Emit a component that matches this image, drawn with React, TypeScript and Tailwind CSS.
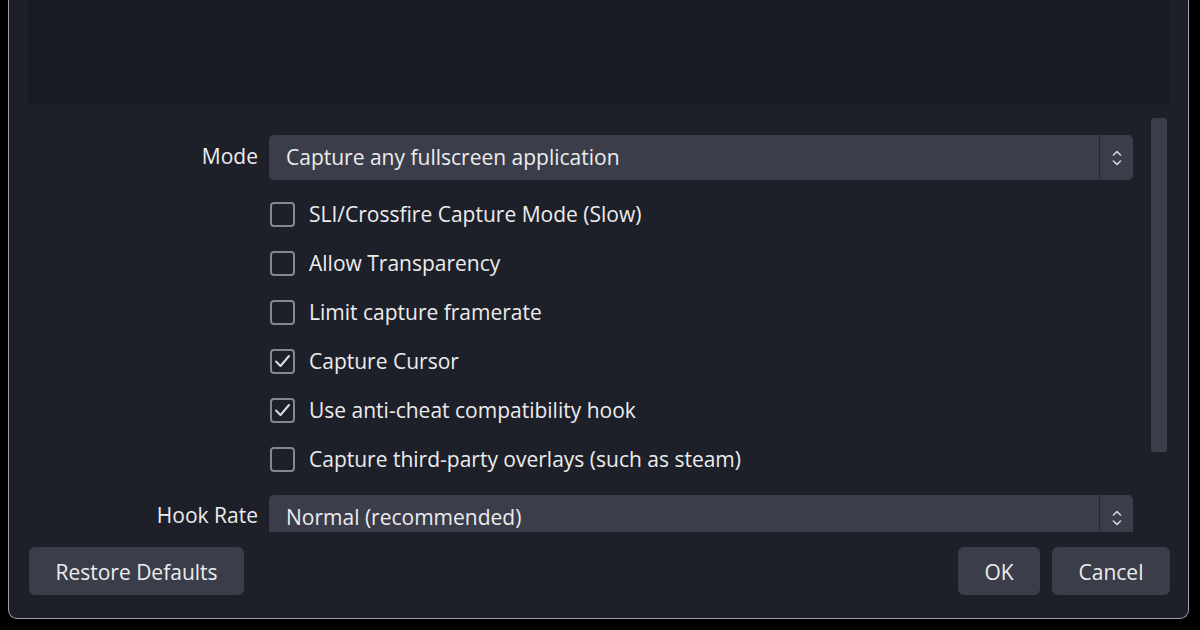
import React from "react";

const font = { fontFamily: '"Open Sans", "Noto Sans", sans-serif' };

function Chevrons() {
  return (
    <svg width="12" height="18" viewBox="0 0 12 18" fill="none" stroke="#d4d5da" strokeWidth="1.6" strokeLinecap="round" strokeLinejoin="round">
      <path d="M2.5 6 L6 2.5 L9.5 6" />
      <path d="M2.5 12 L6 15.5 L9.5 12" />
    </svg>
  );
}

function Select({ text, h }: { text: string; h: string }) {
  return (
    <div className={`w-[864px] ${h} bg-[#3b3e4a] rounded-[5px] flex items-stretch shrink-0`}>
      <div className="flex-1 flex items-center pl-[17px] pt-[1px] text-[21px] text-[#ececee] border-r border-[#272932]">{text}</div>
      <div className="w-[33px] flex items-center justify-center">
        <Chevrons />
      </div>
    </div>
  );
}

function Check({ label, checked }: { label: string; checked?: boolean }) {
  return (
    <div className="h-[49px] flex items-center">
      <div className="w-[1px]" />
      <div className="w-[25px] h-[25px] border-2 border-[#85878d] rounded-[4px] flex items-center justify-center shrink-0">
        {checked && (
          <svg width="21" height="21" viewBox="0 0 21 21" fill="none" stroke="#dcdde1" strokeWidth="2" strokeLinecap="round" strokeLinejoin="round">
            <path d="M4 10.5 L8.5 15 L17 5" />
          </svg>
        )}
      </div>
      <div className="ml-[14px] pt-[1px] text-[21px] text-[#ececee]">{label}</div>
    </div>
  );
}

export default function App() {
  return (
    <div className="w-[1200px] h-[630px] bg-black overflow-hidden" style={font}>
      <div className="ml-[8px] w-[1181px] h-[619px] border border-t-0 border-[#a0a0a4] rounded-b-[9px] bg-[#1e2029] flex flex-col">
        <div className="ml-[19px] mr-[18px] h-[105px] bg-[#191b23] rounded-b-[3px] shrink-0" />
        <div className="h-[427px] overflow-hidden flex shrink-0">
          <div className="flex flex-col pt-[30px]">
            <div className="flex items-center">
              <div className="w-[249px] text-right text-[21px] text-[#ececee] -mt-[2px]">Mode</div>
              <div className="w-[11px]" />
              <Select text="Capture any fullscreen application" h="h-[45px]" />
            </div>
            <div className="mt-[10px] pl-[260px] flex flex-col">
              <Check label="SLI/Crossfire Capture Mode (Slow)" />
              <Check label="Allow Transparency" />
              <Check label="Limit capture framerate" />
              <Check label="Capture Cursor" checked />
              <Check label="Use anti-cheat compatibility hook" checked />
              <Check label="Capture third-party overlays (such as steam)" />
            </div>
            <div className="mt-[11px] flex items-center">
              <div className="w-[249px] text-right text-[21px] text-[#ececee] -mt-[4px]">Hook Rate</div>
              <div className="w-[11px]" />
              <Select text="Normal (recommended)" h="h-[45px]" />
            </div>
          </div>
          <div className="ml-[18px] mt-[13px] w-[16px] h-[334px] bg-[#3b3e4a] rounded-[3px] shrink-0" />
        </div>
        <div className="mt-[15px] pl-[20px] pr-[18px] flex items-center">
          <button className="w-[215px] h-[48px] pt-[3px] bg-[#3b3e4a] rounded-[6px] text-[21px] text-[#ececee]">Restore Defaults</button>
          <div className="flex-1" />
          <button className="w-[82px] h-[48px] pt-[3px] bg-[#3b3e4a] rounded-[6px] text-[21px] text-[#ececee]">OK</button>
          <button className="ml-[12px] w-[118px] h-[48px] pt-[3px] bg-[#3b3e4a] rounded-[6px] text-[21px] text-[#ececee]">Cancel</button>
        </div>
      </div>
    </div>
  );
}
